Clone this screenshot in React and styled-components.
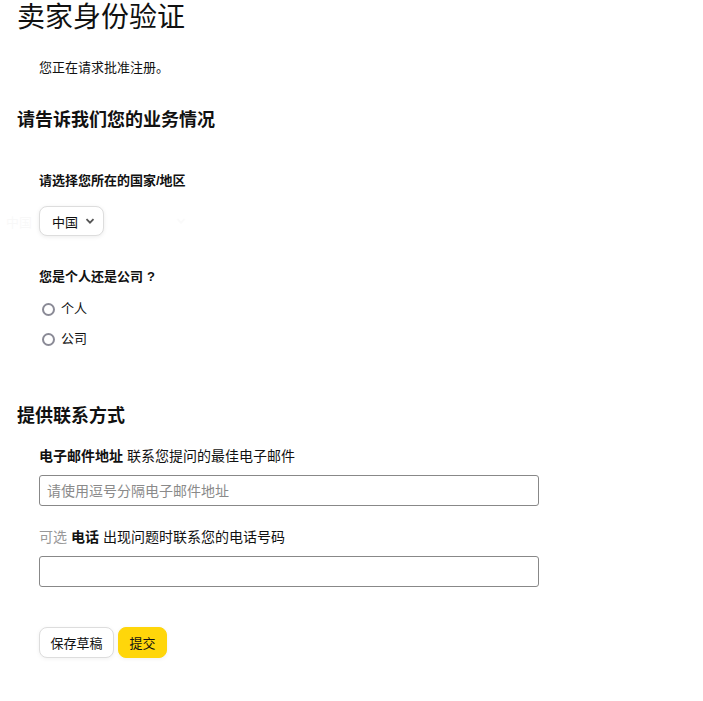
import React from 'react';
import styled, { createGlobalStyle } from 'styled-components';

const Global = createGlobalStyle`
  body {
    margin: 0;
    background: #fff;
    color: #111;
    font-family: "Liberation Sans", "Noto Sans CJK SC", sans-serif;
  }
`;

const Page = styled.div`
  padding: 0 17px 40px;
`;

const Title = styled.h1`
  margin: 0;
  padding-top: 1px;
  font-size: 28px;
  font-weight: 400;
  line-height: 34px;
`;

const Intro = styled.p`
  margin: 23px 0 0 22px;
  font-size: 13px;
  line-height: 20px;
`;

const SectionTitle = styled.h2`
  margin: ${(p) => p.$top}px 0 0;
  font-size: 18px;
  font-weight: 700;
  line-height: 24px;
`;

const Field = styled.div`
  margin: ${(p) => p.$top}px 0 0 22px;
`;

const Label = styled.div`
  font-size: ${(p) => p.$size || 13}px;
  line-height: 20px;
  font-weight: ${(p) => (p.$bold ? 700 : 400)};
  & b { font-weight: 700; }
`;

const Mark = styled.span`
  margin-left: 4px;
`;

const Muted = styled.span`
  color: #999;
  margin-right: 4px;
`;

const SelectWrap = styled.div`
  position: relative;
  margin-top: 15px;
  height: 30px;
`;

const Ghost = styled.div`
  position: absolute;
  left: -39px;
  top: 0;
  width: 200px;
  height: 30px;
  opacity: 0.025;
  display: flex;
  align-items: center;
  justify-content: space-between;
  padding: 0 14px 0 6px;
  box-sizing: border-box;
  font-size: 13px;
`;

const Select = styled.div`
  position: relative;
  display: inline-flex;
  align-items: center;
  gap: 7px;
  height: 30px;
  box-sizing: border-box;
  padding: 0 8px 0 12px;
  border: 1px solid #ddd;
  border-radius: 8px;
  background: #fff;
  box-shadow: 0 1px 4px rgba(0, 0, 0, 0.08);
  font-size: 13px;
`;

const Radios = styled.div`
  margin-top: 12px;
  display: flex;
  flex-direction: column;
  gap: 10px;
`;

const RadioRow = styled.label`
  display: flex;
  align-items: center;
  gap: 6px;
  font-size: 13px;
  line-height: 20px;
`;

const Circle = styled.span`
  width: 13px;
  height: 13px;
  margin-left: 3px;
  box-sizing: border-box;
  border: 2px solid #8a8a96;
  border-radius: 50%;
`;

const Input = styled.input`
  display: block;
  margin-top: 9px;
  width: 500px;
  height: 31px;
  box-sizing: border-box;
  padding: 0 7px;
  border: 1px solid #888;
  border-radius: 3px;
  font-family: inherit;
  font-size: 14px;
  color: #111;
  &::placeholder { color: #8a8a8a; }
`;

const Buttons = styled.div`
  margin: 40px 0 0 22px;
  display: flex;
  gap: 4px;
`;

const Button = styled.button`
  height: 31px;
  padding: 0 10.5px;
  border-radius: 8px;
  font-family: inherit;
  font-size: 13px;
  color: #111;
  border: 1px solid ${(p) => (p.$primary ? '#ffd60a' : '#ddd')};
  background: ${(p) => (p.$primary ? '#ffd60a' : '#fff')};
  box-shadow: 0 1px 4px rgba(0, 0, 0, 0.06);
`;

const Chevron = () => (
  <svg width="10" height="10" viewBox="0 0 10 10">
    <path d="M1.5 3.2 L5 6.7 L8.5 3.2" fill="none" stroke="#555" strokeWidth="1.8" />
  </svg>
);

export default function App() {
  return (
    <Page>
      <Global />
      <Title>卖家身份验证</Title>
      <Intro>您正在请求批准注册。</Intro>

      <SectionTitle $top={30}>请告诉我们您的业务情况</SectionTitle>
      <Field $top={39}>
        <Label $bold>请选择您所在的国家/地区</Label>
        <SelectWrap>
          <Ghost><span>中国</span><Chevron /></Ghost>
          <Select>中国 <Chevron /></Select>
        </SelectWrap>
      </Field>
      <Field $top={31}>
        <Label $bold>您是个人还是公司<Mark>?</Mark></Label>
        <Radios>
          <RadioRow><Circle />个人</RadioRow>
          <RadioRow><Circle />公司</RadioRow>
        </Radios>
      </Field>

      <SectionTitle $top={55}>提供联系方式</SectionTitle>
      <Field $top={18}>
        <Label $size={14}><b>电子邮件地址</b> 联系您提问的最佳电子邮件</Label>
        <Input placeholder="请使用逗号分隔电子邮件地址" />
      </Field>
      <Field $top={21}>
        <Label $size={14}><Muted>可选</Muted><b>电话</b> 出现问题时联系您的电话号码</Label>
        <Input />
      </Field>
      <Buttons>
        <Button>保存草稿</Button>
        <Button $primary>提交</Button>
      </Buttons>
    </Page>
  );
}
